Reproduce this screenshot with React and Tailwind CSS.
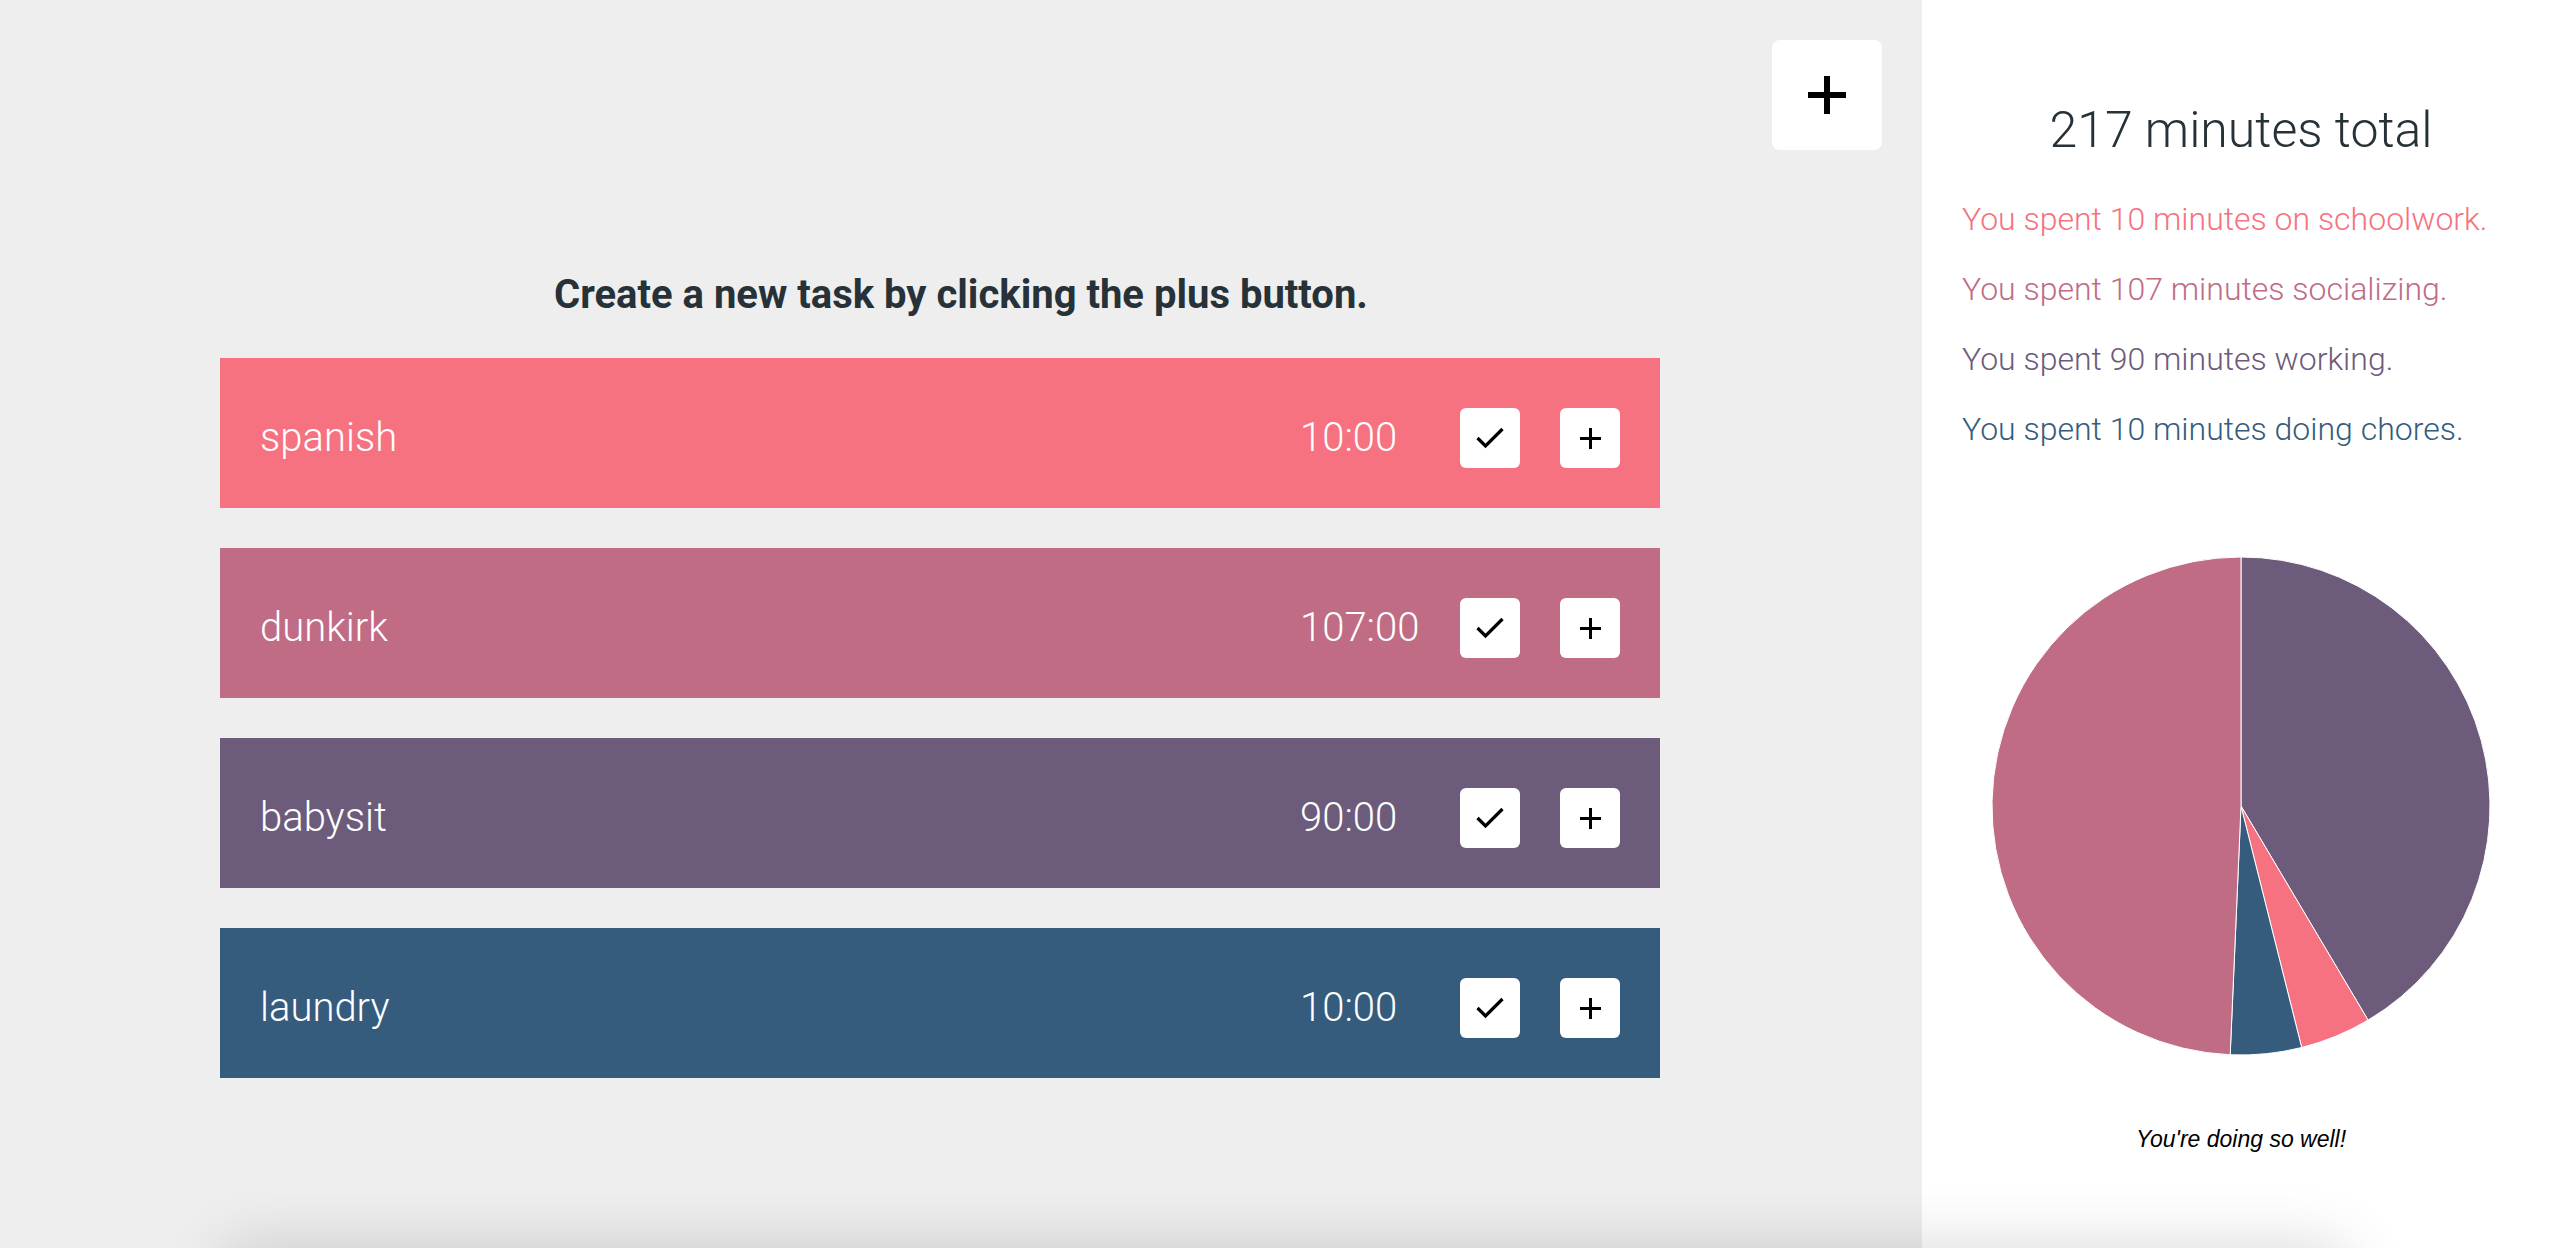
import React from "react";

const tasks = [
  { name: "spanish", time: "10:00", color: "bg-[#f67280]" },
  { name: "dunkirk", time: "107:00", color: "bg-[#c06c84]" },
  { name: "babysit", time: "90:00", color: "bg-[#6c5b7b]" },
  { name: "laundry", time: "10:00", color: "bg-[#355c7d]" },
];

const slices = [
  { value: 90, color: "#6c5b7b" },
  { value: 10, color: "#f67280" },
  { value: 10, color: "#355c7d" },
  { value: 107, color: "#c06c84" },
];

function Pie() {
  const total = slices.reduce((s, x) => s + x.value, 0);
  const cx = 250, cy = 250, r = 249;
  let a0 = -Math.PI / 2;
  const paths = slices.map((s, i) => {
    const a1 = a0 + (s.value / total) * Math.PI * 2;
    const x0 = cx + r * Math.cos(a0), y0 = cy + r * Math.sin(a0);
    const x1 = cx + r * Math.cos(a1), y1 = cy + r * Math.sin(a1);
    const large = a1 - a0 > Math.PI ? 1 : 0;
    const d = `M${cx},${cy} L${x0},${y0} A${r},${r} 0 ${large} 1 ${x1},${y1} Z`;
    a0 = a1;
    return <path key={i} d={d} fill={s.color} stroke="#ffffff" strokeWidth="1" strokeLinejoin="round" />;
  });
  return (
    <svg width="500" height="500" viewBox="0 0 500 500">
      {paths}
    </svg>
  );
}

function CheckIcon() {
  return (
    <svg width="28" height="22" viewBox="0 0 28 22" fill="none">
      <polyline points="1.5,11 9.5,19 26.5,2" stroke="#000" strokeWidth="3.2" strokeLinecap="butt" strokeLinejoin="miter" />
    </svg>
  );
}

function PlusIcon({ size = 22, stroke = 3 }) {
  return (
    <svg width={size} height={size} viewBox={`0 0 ${size} ${size}`} fill="none">
      <line x1={size / 2} y1="0" x2={size / 2} y2={size} stroke="#000" strokeWidth={stroke} />
      <line x1="0" y1={size / 2} x2={size} y2={size / 2} stroke="#000" strokeWidth={stroke} />
    </svg>
  );
}

export default function App() {
  return (
    <div className="relative flex h-[1248px] w-full overflow-hidden font-['Roboto',sans-serif]">
      <main className="flex w-[1922px] shrink-0 flex-col bg-[#eeeeee]">
        <div className="flex justify-end pr-[40px] pt-[40px]">
          <button className="flex h-[110px] w-[110px] items-center justify-center rounded-[8px] bg-white">
            <PlusIcon size={38} stroke={6} />
          </button>
        </div>
        <h1 className="mt-[121px] text-center text-[40px] font-bold leading-[48px] text-[#263238]">
          Create a new task by clicking the plus button.
        </h1>
        <div className="ml-[220px] mt-[39px] flex w-[1440px] flex-col gap-[40px]">
          {tasks.map((t) => (
            <div key={t.name} className={`flex h-[150px] items-center px-[40px] pt-[10px] ${t.color}`}>
              <div className="flex-1 text-[40px] font-light leading-[48px] text-white">{t.name}</div>
              <div className="w-[160px] text-[40px] font-light leading-[48px] text-white">{t.time}</div>
              <button className="flex h-[60px] w-[60px] items-center justify-center rounded-[6px] bg-white">
                <CheckIcon />
              </button>
              <button className="ml-[40px] flex h-[60px] w-[60px] items-center justify-center rounded-[6px] bg-white">
                <PlusIcon size={21} stroke={3} />
              </button>
            </div>
          ))}
        </div>
      </main>
      <aside className="flex flex-1 flex-col bg-white">
        <h2 className="mt-[100px] text-center text-[50px] font-light leading-[60px] text-[#263238]">
          217 minutes total
        </h2>
        <div className="mt-[24px] flex flex-col pl-[40px] text-[32px] font-light leading-[70px]">
          <p className="text-[#f67280]">You spent 10 minutes on schoolwork.</p>
          <p className="text-[#c06c84]">You spent 107 minutes socializing.</p>
          <p className="text-[#6c5b7b]">You spent 90 minutes working.</p>
          <p className="text-[#355c7d]">You spent 10 minutes doing chores.</p>
        </div>
        <div className="mt-[92px] flex justify-center">
          <Pie />
        </div>
        <p className="mt-[69px] text-center font-['Liberation_Sans',Arial,sans-serif] text-[23px] italic leading-[28px] text-black">
          You're doing so well!
        </p>
      </aside>
      <div className="pointer-events-none absolute left-[225px] top-[1248px] h-[200px] w-[2120px] bg-white shadow-[0_0_60px_rgba(0,0,0,0.16)]" />
    </div>
  );
}
